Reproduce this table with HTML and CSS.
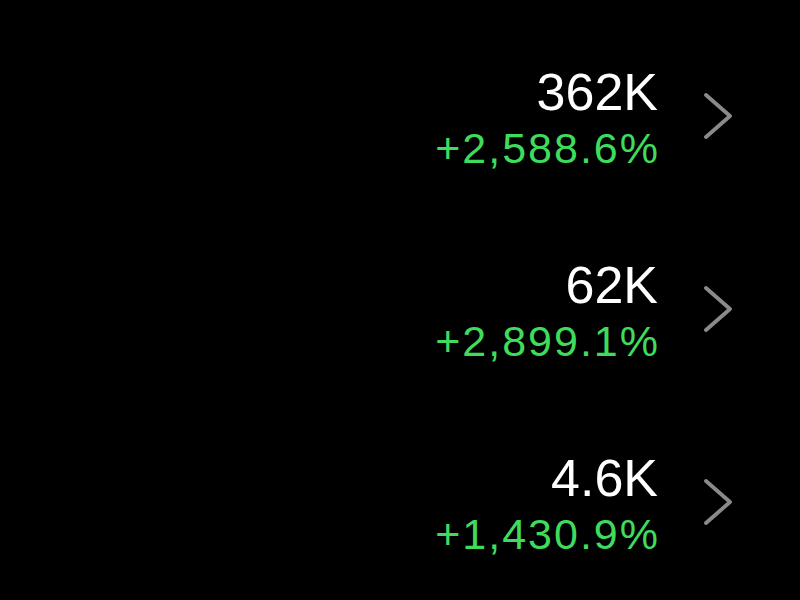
FILE: index.html
```html
<!DOCTYPE html>
<html>
<head>
<meta charset="utf-8">
<link rel="stylesheet" href="styles.css">
</head>
<body>
<div class="list">
  <div class="row">
    <div class="text">
      <div class="value">362K</div>
      <div class="change">+2,588.6%</div>
    </div>
    <svg class="chev" width="31" height="48" viewBox="0 0 31 48"><polyline points="3,3 27,24 3,45" /></svg>
  </div>
  <div class="row">
    <div class="text">
      <div class="value">62K</div>
      <div class="change">+2,899.1%</div>
    </div>
    <svg class="chev" width="31" height="48" viewBox="0 0 31 48"><polyline points="3,3 27,24 3,45" /></svg>
  </div>
  <div class="row">
    <div class="text">
      <div class="value">4.6K</div>
      <div class="change">+1,430.9%</div>
    </div>
    <svg class="chev" width="31" height="48" viewBox="0 0 31 48"><polyline points="3,3 27,24 3,45" /></svg>
  </div>
</div>
</body>
</html>
```

FILE: styles.css
```css
html, body {
  margin: 0;
  padding: 0;
  background: #000;
  font-family: "Liberation Sans", Arial, sans-serif;
}
.list {
  padding-top: 66px;
  display: flex;
  flex-direction: column;
  gap: 90.5px;
}
.row {
  display: flex;
  justify-content: flex-end;
  align-items: flex-start;
  padding-right: 66px;
  gap: 45px;
}
.text {
  display: flex;
  flex-direction: column;
  align-items: flex-end;
  gap: 8.5px;
}
.value {
  color: #fff;
  font-size: 52px;
  line-height: 52px;
}
.change {
  color: #3fdc5c;
  font-size: 43px;
  line-height: 42px;
  letter-spacing: 2px;
  margin-right: -2px;
}
.chev {
  margin-top: 26px;
  filter: blur(0.5px);
}
.chev polyline {
  fill: none;
  stroke: #8a8a8a;
  stroke-width: 3.8;
  stroke-linecap: round;
  stroke-linejoin: round;
}
```
